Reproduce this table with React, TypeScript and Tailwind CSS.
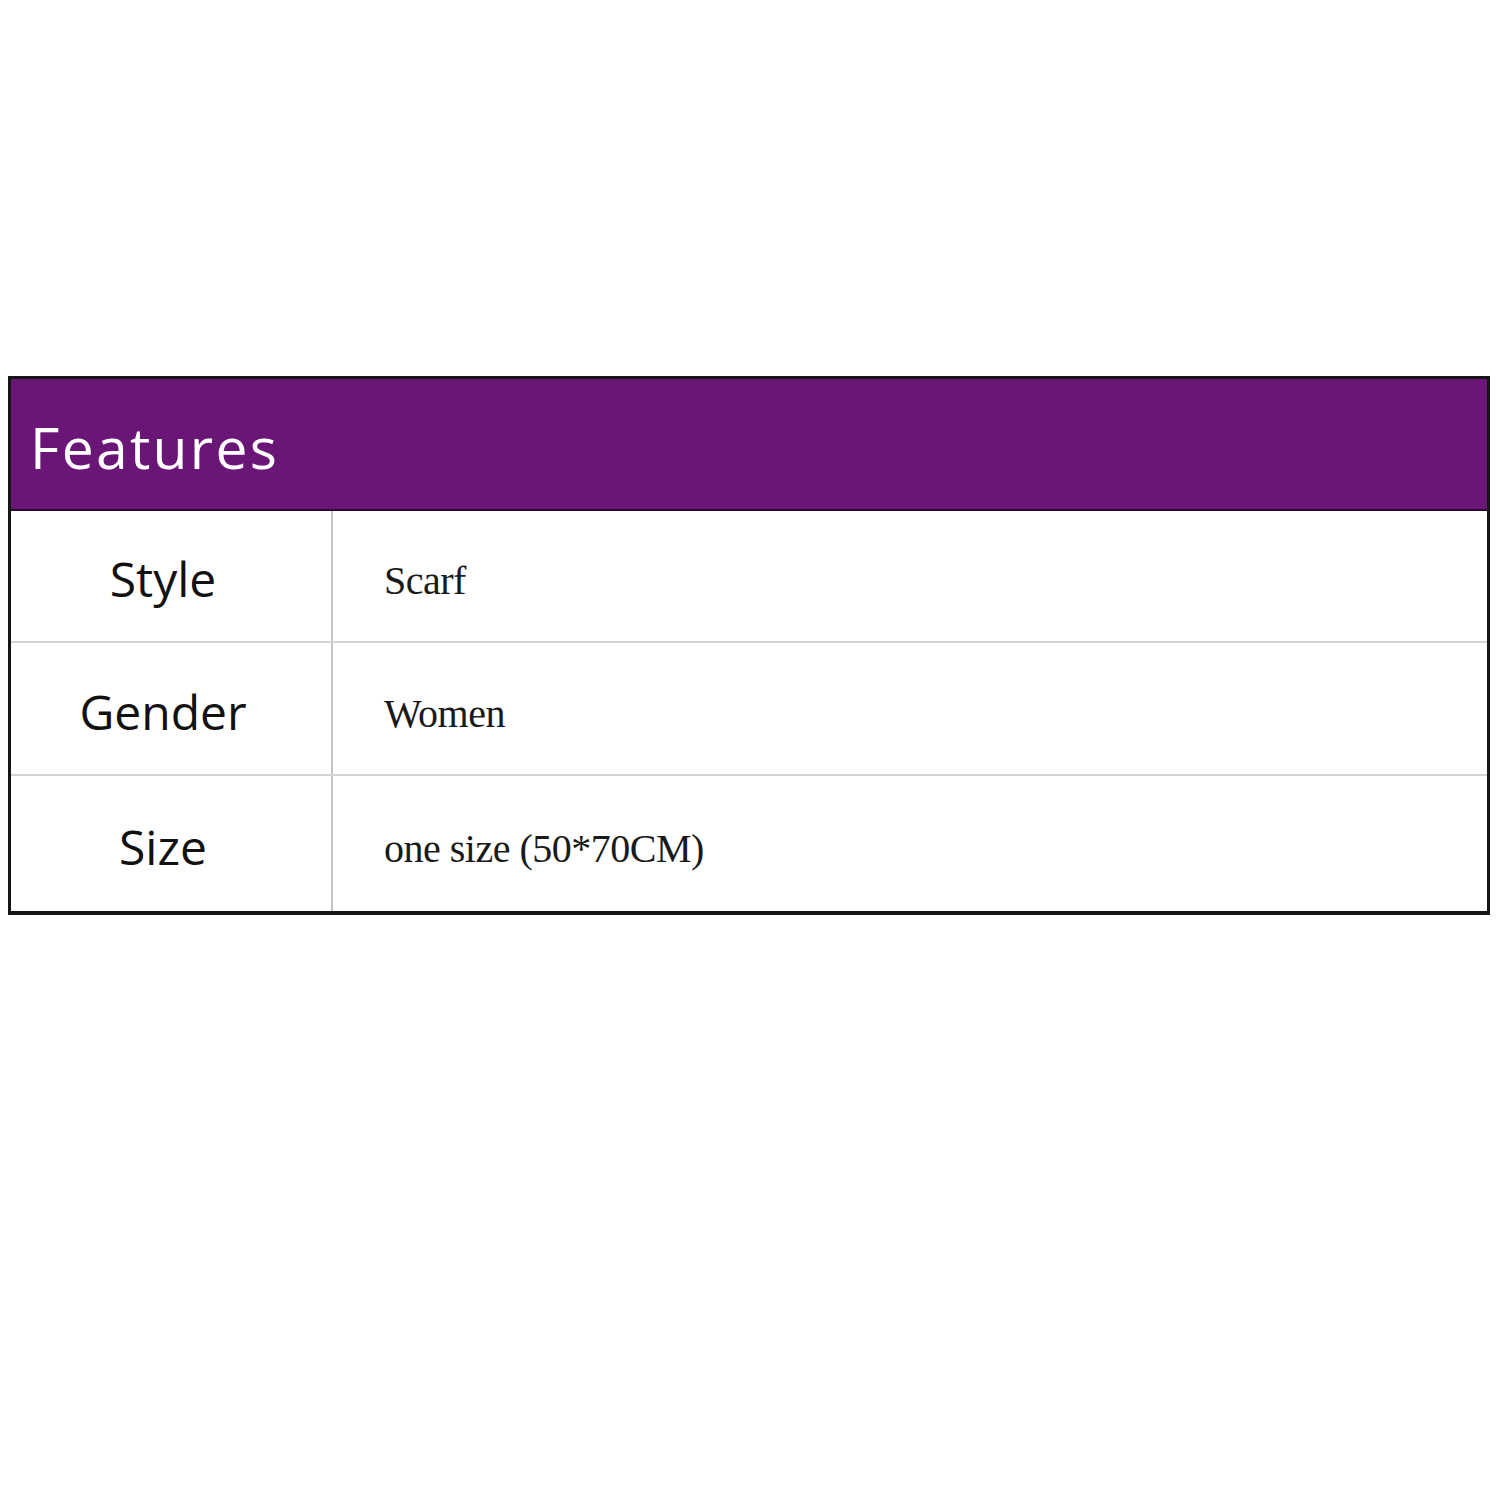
import React from "react";

const rows = [
  { label: "Style", value: "Scarf", h: "h-[132px]", border: true },
  { label: "Gender", value: "Women", h: "h-[133px]", border: true },
  { label: "Size", value: "one size (50*70CM)", h: "h-[135px]", border: false },
];

export default function App() {
  return (
    <div className="w-[1500px] h-[1500px] bg-white pt-[376px] pl-[8px]">
      <div className="w-[1482px] border-[3px] border-b-4 border-[#151515] bg-white">
        <div className="h-[132px] bg-[#6a1677] border-b-2 border-[#2a0a2e] flex items-center pl-[19px] pt-[6px]">
          <span className="text-white text-[57px] leading-none tracking-[2.3px]" style={{ fontFamily: '"Open Sans", sans-serif' }}>
            Features
          </span>
        </div>
        {rows.map((r) => (
          <div key={r.label} className={`flex ${r.h} ${r.border ? "border-b-2 border-[#d4d4d4]" : ""}`}>
            <div className="w-[322px] border-r-2 border-[#c4c4c4] flex items-center justify-center pr-[16px] pt-[6px]">
              <span className="text-[#111] text-[48px] leading-none" style={{ fontFamily: '"Open Sans", sans-serif' }}>
                {r.label}
              </span>
            </div>
            <div className="flex-1 flex items-center pl-[51px] pt-[10px]">
              <span className="text-[#1a1a1a] text-[40px] leading-none tracking-[-0.5px]" style={{ fontFamily: '"Liberation Serif", serif' }}>
                {r.value}
              </span>
            </div>
          </div>
        ))}
      </div>
    </div>
  );
}
